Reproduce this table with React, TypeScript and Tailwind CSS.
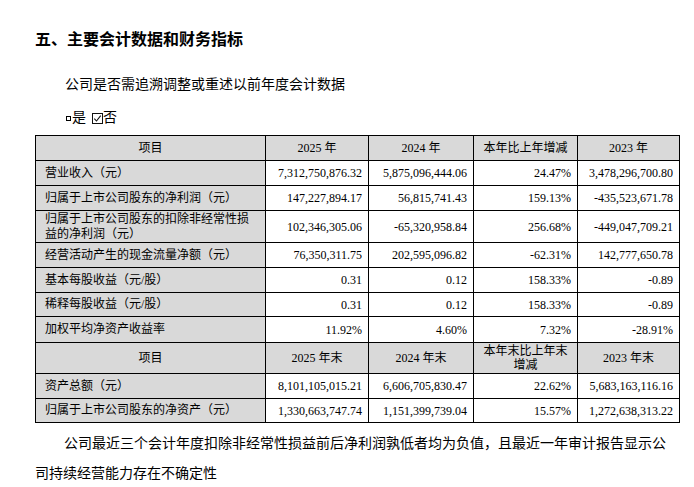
const FONT = '"Liberation Serif", "Noto Sans CJK SC", serif';

type Row = {
  label: string[];
  values: string[];
  h: string;
  head?: boolean;
};

const rows: Row[] = [
  { label: ['项目'], values: ['2025 年', '2024 年', '本年比上年增减', '2023 年'], h: 'h-[25px]', head: true },
  { label: ['营业收入（元）'], values: ['7,312,750,876.32', '5,875,096,444.06', '24.47%', '3,478,296,700.80'], h: 'h-[25px]' },
  { label: ['归属于上市公司股东的净利润（元）'], values: ['147,227,894.17', '56,815,741.43', '159.13%', '-435,523,671.78'], h: 'h-[25px]' },
  {
    label: ['归属于上市公司股东的扣除非经常性损', '益的净利润（元）'],
    values: ['102,346,305.06', '-65,320,958.84', '256.68%', '-449,047,709.21'],
    h: 'h-[32px]',
  },
  { label: ['经营活动产生的现金流量净额（元）'], values: ['76,350,311.75', '202,595,096.82', '-62.31%', '142,777,650.78'], h: 'h-[25px]' },
  { label: ['基本每股收益（元/股）'], values: ['0.31', '0.12', '158.33%', '-0.89'], h: 'h-[25px]' },
  { label: ['稀释每股收益（元/股）'], values: ['0.31', '0.12', '158.33%', '-0.89'], h: 'h-[24px]' },
  { label: ['加权平均净资产收益率'], values: ['11.92%', '4.60%', '7.32%', '-28.91%'], h: 'h-[26px]' },
  { label: ['项目'], values: ['2025 年末', '2024 年末', '本年末比上年末\n增减', '2023 年末'], h: 'h-[31px]', head: true },
  { label: ['资产总额（元）'], values: ['8,101,105,015.21', '6,606,705,830.47', '22.62%', '5,683,163,116.16'], h: 'h-[25px]' },
  { label: ['归属于上市公司股东的净资产（元）'], values: ['1,330,663,747.74', '1,151,399,739.04', '15.57%', '1,272,638,313.22'], h: 'h-[24px]' },
];

function CheckedBox() {
  return (
    <svg width="11" height="11" viewBox="0 0 11 11" className="inline-block">
      <rect x="0.5" y="0.5" width="10" height="10" fill="none" stroke="#111" strokeWidth="1" />
      <path d="M2.3 5.6 L4.5 8 L8.7 2.6" fill="none" stroke="#111" strokeWidth="1.1" />
    </svg>
  );
}

export default function App() {
  return (
    <div className="h-[487px] w-[694px] overflow-hidden bg-white text-black" style={{ fontFamily: FONT }}>
      <div className="pl-[35px] pt-[28px]">
        <h2 className="text-[16px] font-bold leading-[24px]">五、主要会计数据和财务指标</h2>
        <p className="mt-[21px] pl-[30px] text-[14px] leading-[24px]">公司是否需追溯调整或重述以前年度会计数据</p>
        <p className="mt-[9px] flex items-center pl-[31px] text-[14px] leading-[24px]">
          <span className="mr-[1px] inline-block h-[5px] w-[5px] border border-black" />
          <span>是</span>
          <span className="ml-[6px] flex items-center">
            <CheckedBox />
          </span>
          <span>否</span>
        </p>

        <table className="mt-[5px] w-[644px] table-fixed border-collapse text-[12px]">
          <colgroup>
            <col className="w-[230px]" />
            <col className="w-[103px]" />
            <col className="w-[105px]" />
            <col className="w-[104px]" />
            <col className="w-[102px]" />
          </colgroup>
          <tbody>
            {rows.map((row, i) => (
              <tr key={i} className={row.h}>
                <td
                  className={`border border-black bg-[#d9d9d9] py-0 leading-[15px] ${
                    row.head ? 'text-center' : 'pl-[9px] pr-[12px] text-left'
                  }`}
                >
                  {row.label.map((l, j) => (
                    <div key={j}>{l}</div>
                  ))}
                </td>
                {row.values.map((v, j) => (
                  <td
                    key={j}
                    className={`border border-black py-0 leading-[14px] ${
                      row.head ? 'bg-[#d9d9d9] text-center' : 'bg-white pr-[6px] text-right'
                    }`}
                  >
                    {v.split('\n').map((t, k) => (
                      <div key={k}>{t}</div>
                    ))}
                  </td>
                ))}
              </tr>
            ))}
          </tbody>
        </table>

        <p className="mt-[6px] w-[640px] indent-[29px] text-[14px] leading-[30px]">
          公司最近三个会计年度扣除非经常性损益前后净利润孰低者均为负值，且最近一年审计报告显示公司持续经营能力存在不确定性
        </p>
      </div>
    </div>
  );
}
